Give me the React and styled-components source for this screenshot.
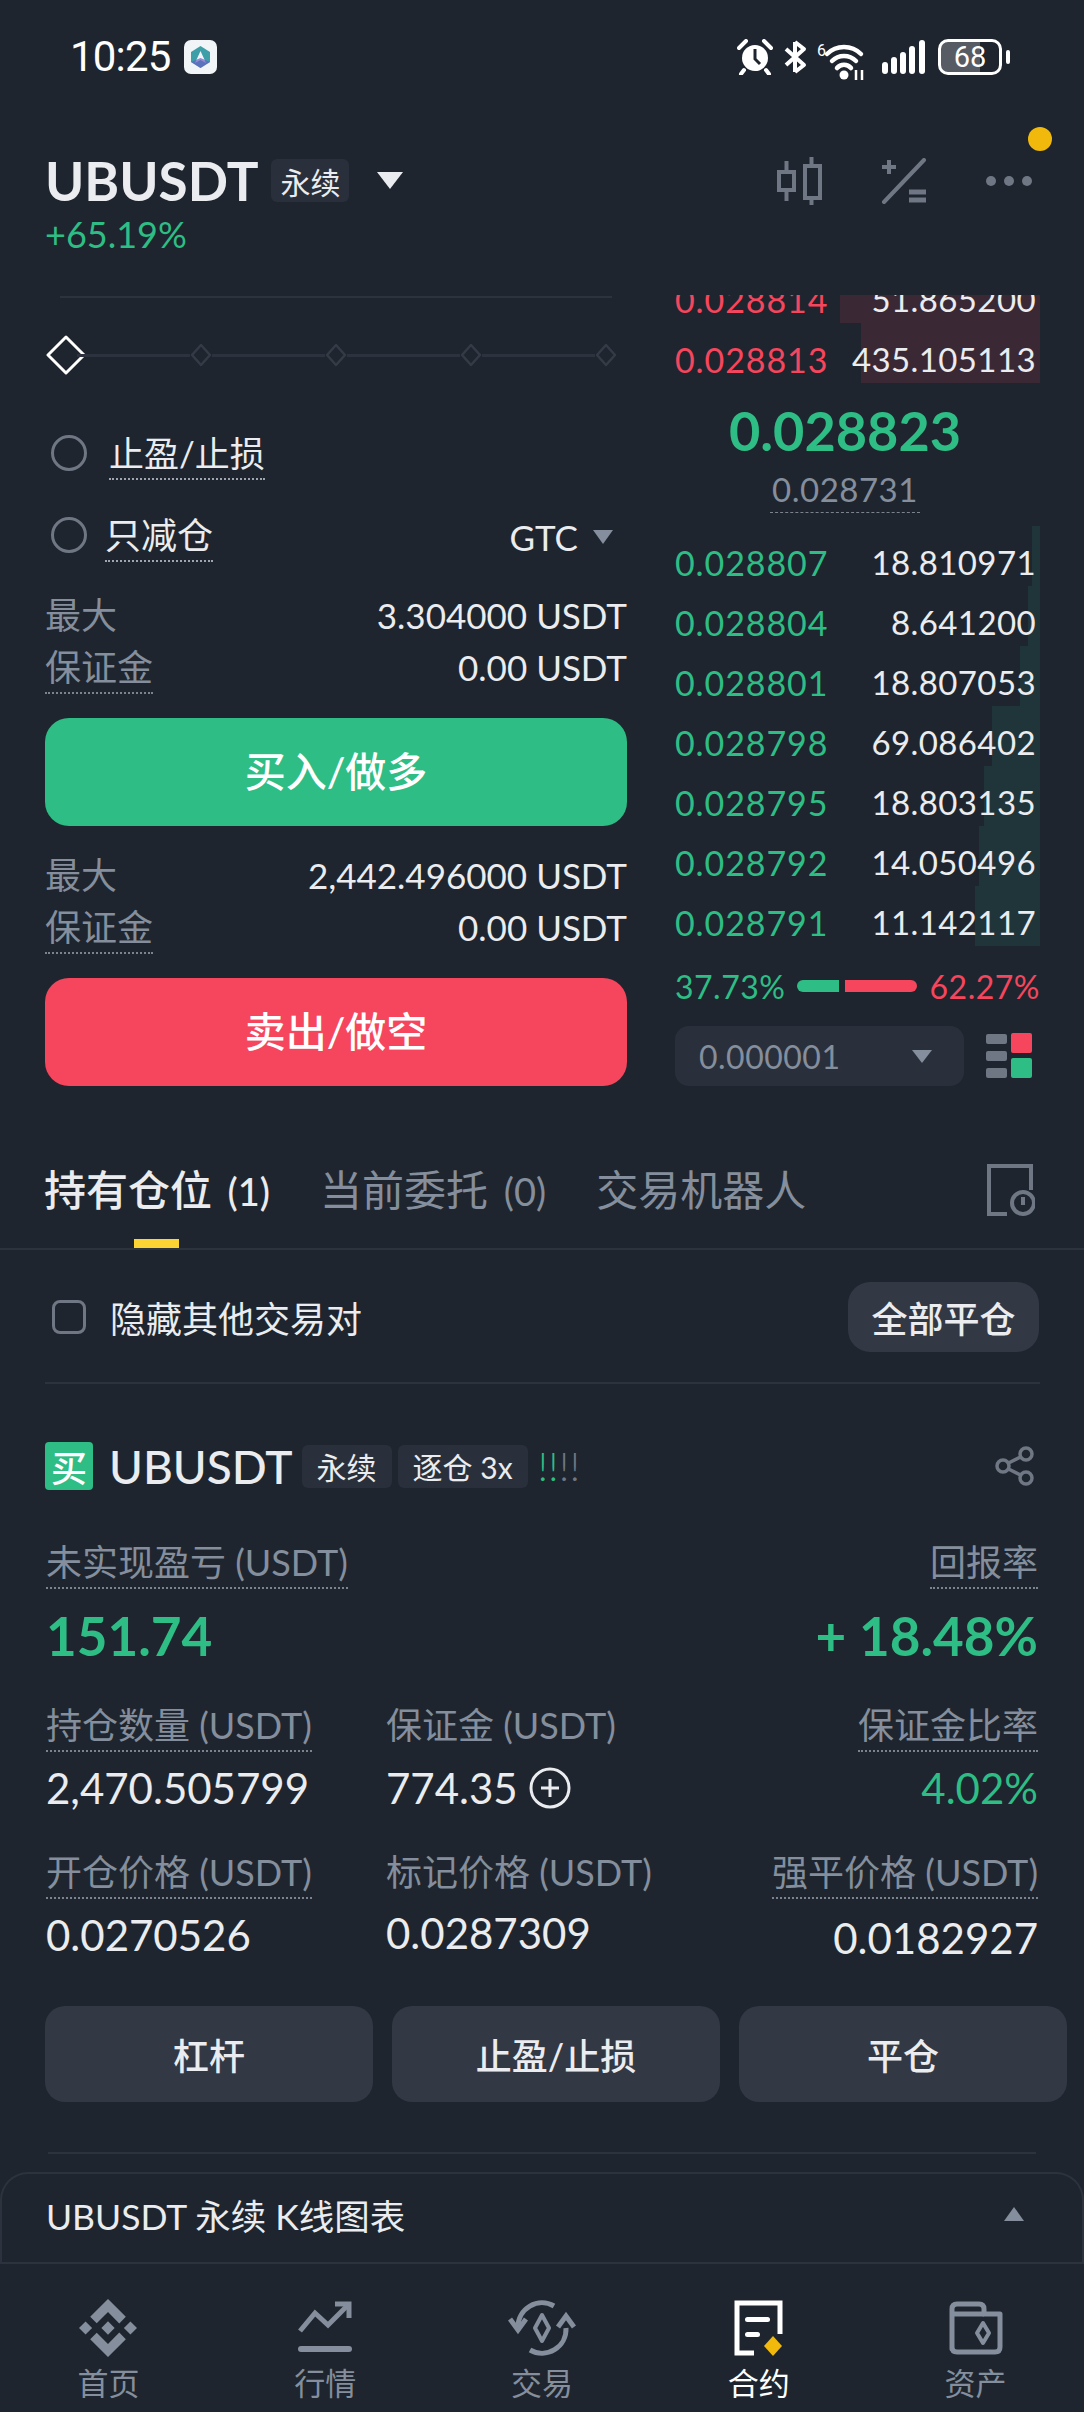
import styled, { createGlobalStyle } from "styled-components";

const GlobalStyle = createGlobalStyle`
  html, body {
    margin: 0;
    padding: 0;
    background: #1e252e;
  }
  * {
    box-sizing: border-box;
  }
`;

const GREEN = "#2ebd85";
const RED = "#f6465d";
const GRAY = "#848e9c";
const TEXT = "#eaecef";
const PANEL = "#2a303b";
const BUTTON = "#323844";
const LINE = "#2c333e";

const asks = [
  { price: "0.028814", qty: "51.865200", depth: 200 },
  { price: "0.028813", qty: "435.105113", depth: 179 },
];

const bids = [
  { price: "0.028807", qty: "18.810971", depth: 8 },
  { price: "0.028804", qty: "8.641200", depth: 12 },
  { price: "0.028801", qty: "18.807053", depth: 20 },
  { price: "0.028798", qty: "69.086402", depth: 48 },
  { price: "0.028795", qty: "18.803135", depth: 56 },
  { price: "0.028792", qty: "14.050496", depth: 61 },
  { price: "0.028791", qty: "11.142117", depth: 65 },
];

const Page = styled.div`
  width: 1084px;
  height: 2412px;
  overflow: hidden;
  background: #1e252e;
  color: ${TEXT};
  font-family: Lato, "Noto Sans CJK SC", sans-serif;
`;

/* status bar */
const StatusBar = styled.div`
  height: 113px;
  padding: 0 74px 0 70px;
  display: flex;
  align-items: center;
  color: #fff;
`;

const Clock = styled.span`
  font-family: Roboto, sans-serif;
  font-size: 42px;
  letter-spacing: -0.8px;
  margin-right: 13px;
`;

const StatusIcons = styled.div`
  margin-left: auto;
  display: flex;
  align-items: center;
  gap: 9px;
`;

const Battery = styled.div`
  position: relative;
  width: 64px;
  height: 36px;
  border: 3px solid #fff;
  border-radius: 10px;
  margin-right: 8px;
  margin-left: 4px;
  background: linear-gradient(90deg, #575c64 68%, transparent 68%);
  font-family: Roboto, sans-serif;
  font-size: 29px;
  line-height: 30px;
  text-align: center;
  &::after {
    content: "";
    position: absolute;
    right: -11px;
    top: 8px;
    width: 4px;
    height: 14px;
    border-radius: 2px;
    background: #fff;
  }
`;

/* symbol header */
const Header = styled.div`
  height: 182px;
  padding: 44px 51px 0 45px;
`;

const TitleRow = styled.div`
  display: flex;
  align-items: center;
  height: 47px;
`;

const Symbol = styled.span`
  font-size: ${(p) => p.$size || 53}px;
  font-weight: ${(p) => p.$weight || 700};
  line-height: 47px;
`;

const Tag = styled.span`
  height: 43px;
  padding: 0 ${(p) => p.$pad || 9}px;
  margin-left: ${(p) => p.$left || 13}px;
  display: inline-flex;
  align-items: center;
  border-radius: 6px;
  background: ${PANEL};
  font-size: 30px;
  color: ${TEXT};
  white-space: nowrap;
`;

const Caret = styled.span`
  display: inline-block;
  width: 0;
  height: 0;
  border-left: ${(p) => p.$w}px solid transparent;
  border-right: ${(p) => p.$w}px solid transparent;
  border-${(p) => (p.$up ? "bottom" : "top")}: ${(p) => p.$h}px solid ${(p) => p.$color || GRAY};
  margin-left: ${(p) => p.$left || 0}px;
  flex-shrink: 0;
`;

const ToolIcons = styled.div`
  margin-left: auto;
  display: flex;
  align-items: center;
  gap: 59px;
  position: relative;
`;

const Dot = styled.span`
  position: absolute;
  right: -19px;
  top: -30px;
  width: 24px;
  height: 24px;
  border-radius: 50%;
  background: #f0b90b;
`;

const Change = styled.div`
  margin-top: 10px;
  font-size: 36px;
  line-height: 40px;
  color: ${GREEN};
`;

/* trade panel */
const TradeGrid = styled.div`
  display: grid;
  grid-template-columns: 582px 365px;
  column-gap: 48px;
  padding-left: 45px;
`;

const FormColumn = styled.div`
  display: flex;
  flex-direction: column;
`;

const TopRule = styled.div`
  height: 2px;
  margin: 1px 15px 0;
  background: ${LINE};
`;

const Slider = styled.div`
  display: flex;
  align-items: center;
  height: 40px;
  margin: 37px 10px 0 10px;
`;

const SliderLine = styled.span`
  flex: 1;
  height: 3px;
  background: ${LINE};
`;

const DiamondSvg = styled.svg`
  flex-shrink: 0;
  margin: 0 ${(p) => (p.$big ? -9 : 0)}px;
`;

const OptionRow = styled.div`
  display: flex;
  align-items: flex-start;
  margin-top: ${(p) => p.$top}px;
`;

const Radio = styled.span`
  width: 36px;
  height: 36px;
  margin: 4px ${(p) => p.$gap}px 0 6px;
  border: 3px solid #6f7784;
  border-radius: 50%;
  flex-shrink: 0;
`;

const Dotted = styled.span`
  display: inline-block;
  font-size: ${(p) => p.$size || 36}px;
  line-height: 44px;
  height: 49px;
  padding-bottom: 3px;
  border-bottom: 2px dotted ${(p) => p.$line || "#7b838f"};
  color: ${(p) => p.$color || GRAY};
  white-space: nowrap;
`;

const PlainLabel = styled.div`
  height: 49px;
  font-size: 36px;
  line-height: 44px;
  color: ${GRAY};
  white-space: nowrap;
`;

const Tif = styled.div`
  margin-left: auto;
  display: flex;
  align-items: center;
  height: 44px;
  margin-top: 2px;
  padding-right: 14px;
  font-size: 35px;
  color: ${TEXT};
`;

const InfoRow = styled.div`
  display: flex;
  justify-content: space-between;
  margin-top: ${(p) => p.$top}px;
  font-size: 35px;
  line-height: 44px;
  color: ${TEXT};
`;

const InfoLabel = styled.span`
  font-size: 36px;
  color: ${GRAY};
`;

const ActionButton = styled.div`
  height: 108px;
  margin-top: ${(p) => p.$top}px;
  padding-bottom: 6px;
  display: flex;
  align-items: center;
  justify-content: center;
  border-radius: 24px;
  background: ${(p) => p.$color};
  color: #fff;
  font-size: 41px;
  font-weight: 500;
`;

/* order book */
const BookColumn = styled.div`
  display: flex;
  flex-direction: column;
`;

const AskList = styled.div`
  height: 88px;
  overflow: hidden;
  display: flex;
  flex-direction: column;
  justify-content: flex-end;
`;

const BookRow = styled.div`
  position: relative;
  flex-shrink: 0;
  height: 60px;
  padding: 12px 4px 0 0;
  display: flex;
  align-items: center;
  justify-content: space-between;
  font-size: 33px;
`;

const BookPrice = styled.span`
  position: relative;
  font-size: 34px;
  letter-spacing: 0.9px;
  color: ${(p) => p.$color};
`;

const BookQty = styled.span`
  position: relative;
  letter-spacing: 0.4px;
  color: ${TEXT};
`;

const DepthBar = styled.span`
  position: absolute;
  right: 0;
  top: 0;
  bottom: 0;
  background: ${(p) => p.$color};
`;

const MidBlock = styled.div`
  width: 340px;
  display: flex;
  flex-direction: column;
  align-items: center;
`;

const MidPrice = styled.div`
  margin-top: 18px;
  font-size: 54px;
  font-weight: 700;
  line-height: 60px;
  color: ${GREEN};
`;

const MarkPrice = styled.div`
  margin-top: 8px;
  height: 44px;
  font-size: 33px;
  line-height: 40px;
  letter-spacing: 0.5px;
  color: ${GRAY};
  border-bottom: 1px dashed #7b838f;
  padding: 0 2px;
`;

const BidList = styled.div`
  margin-top: 13px;
  display: flex;
  flex-direction: column;
`;

const RatioRow = styled.div`
  height: 40px;
  margin-top: 20px;
  display: flex;
  align-items: center;
  font-size: 32px;
  letter-spacing: 0.5px;
`;

const RatioText = styled.span`
  color: ${(p) => p.$color};
`;

const RatioBars = styled.div`
  flex: 1;
  margin: 0 12px;
  display: flex;
  gap: 6px;
`;

const RatioBar = styled.span`
  height: 12px;
  background: ${(p) => p.$color};
  border-radius: ${(p) => p.$radius};
`;

const StepRow = styled.div`
  margin-top: 20px;
  display: flex;
  align-items: center;
  justify-content: space-between;
  padding-right: 7px;
`;

const StepSelect = styled.div`
  width: 289px;
  height: 60px;
  padding: 0 32px 0 24px;
  display: flex;
  align-items: center;
  justify-content: space-between;
  border-radius: 14px;
  background: ${PANEL};
  font-size: 32px;
  letter-spacing: 0.5px;
  color: ${GRAY};
`;

/* tabs */
const TabBar = styled.div`
  margin-top: 78px;
  height: 86px;
  padding: 0 49px 0 44px;
  display: flex;
  align-items: flex-start;
  gap: 50px;
  border-bottom: 2px solid ${LINE};
`;

const Tab = styled.div`
  position: relative;
  height: 84px;
  font-size: 42px;
  font-weight: ${(p) => (p.$active ? 500 : 400)};
  line-height: 52px;
  color: ${(p) => (p.$active ? TEXT : GRAY)};
  white-space: nowrap;
  ${(p) =>
    p.$active &&
    `&::after {
      content: "";
      position: absolute;
      left: 90px;
      bottom: 0;
      width: 45px;
      height: 9px;
      background: #fcd535;
    }`}
`;

const TabCount = styled.span`
  margin-left: 5px;
  font-size: 38px;
`;

const TabIcon = styled.div`
  margin-left: auto;
`;

/* positions */
const FilterRow = styled.div`
  padding: 32px 45px 30px 52px;
  display: flex;
  align-items: center;
`;

const Checkbox = styled.span`
  width: 34px;
  height: 34px;
  margin-right: 24px;
  border: 3px solid #6f7784;
  border-radius: 8px;
`;

const FilterText = styled.span`
  font-size: 36px;
  color: ${TEXT};
`;

const CloseAll = styled.div`
  margin-left: auto;
  width: 191px;
  height: 70px;
  display: flex;
  align-items: center;
  justify-content: center;
  border-radius: 22px;
  background: ${BUTTON};
  font-size: 36px;
  font-weight: 500;
`;

const Rule = styled.div`
  height: 2px;
  margin: ${(p) => p.$margin};
  background: ${LINE};
`;

const PositionHead = styled.div`
  margin-top: 58px;
  height: 48px;
  padding: 0 49px 0 45px;
  display: flex;
  align-items: center;
`;

const SideBadge = styled.span`
  width: 48px;
  height: 48px;
  margin-right: 16px;
  display: flex;
  align-items: center;
  justify-content: center;
  border-radius: 4px;
  background: ${GREEN};
  color: #fff;
  font-size: 36px;
  font-weight: 500;
`;

const Risk = styled.span`
  margin-left: 10px;
  font-size: 40px;
  font-weight: 300;
  letter-spacing: 0.5px;
  color: ${GREEN};
`;

const RiskOff = styled.span`
  color: #6f7784;
`;

const HeadIcon = styled.div`
  margin-left: auto;
  display: flex;
`;

const MetricGrid = styled.div`
  margin-top: 50px;
  padding: 0 46px;
  display: grid;
  grid-template-columns: 340px 1fr auto;
  row-gap: 37px;
`;

const Metric = styled.div`
  grid-column: ${(p) => p.$col};
  display: flex;
  flex-direction: column;
  align-items: ${(p) => (p.$end ? "flex-end" : "flex-start")};
`;

const MetricValue = styled.div`
  margin-top: ${(p) => p.$top || 11}px;
  display: flex;
  align-items: center;
  gap: 11px;
  font-size: 42px;
  line-height: 50px;
  color: ${(p) => p.$color || TEXT};
`;

const PnlValue = styled.div`
  margin-top: 17px;
  font-size: 53px;
  font-weight: 700;
  line-height: 60px;
  color: ${GREEN};
`;

const PositionActions = styled.div`
  margin-top: 43px;
  padding-left: 45px;
  display: flex;
  gap: 19px;
`;

const PositionButton = styled.div`
  width: 328px;
  height: 96px;
  flex-shrink: 0;
  display: flex;
  align-items: center;
  justify-content: center;
  border-radius: 20px;
  background: ${BUTTON};
  font-size: 36px;
  font-weight: 500;
`;

/* chart drawer and nav */
const ChartDrawer = styled.div`
  margin-top: 18px;
  height: 90px;
  padding: 0 58px 8px 44px;
  display: flex;
  align-items: center;
  justify-content: space-between;
  border: 2px solid ${LINE};
  border-bottom: 0;
  border-radius: 28px 28px 0 0;
  font-size: 35.5px;
`;

const BottomNav = styled.div`
  height: 151px;
  padding-top: 35px;
  display: grid;
  grid-template-columns: repeat(5, 1fr);
  border-top: 2px solid ${LINE};
`;

const NavItem = styled.div`
  display: flex;
  flex-direction: column;
  align-items: center;
  color: ${(p) => (p.$active ? "#fff" : GRAY)};
`;

const NavIcon = styled.div`
  height: 58px;
  display: flex;
  align-items: center;
`;

const NavLabel = styled.span`
  margin-top: 8px;
  font-size: 31px;
  line-height: 36px;
`;

function AppBadge() {
  return (
    <svg width="33" height="34" viewBox="0 0 33 34">
      <rect width="33" height="34" rx="7" fill="#f2f5f8" />
      <path d="M16.5 6 L26 12 V22 L16.5 28 L7 22 V12 Z" fill="#3f9fa8" />
      <path d="M16.5 11 L22 23 L16.5 20 L11 23 Z" fill="#f2f5f8" />
      <path d="M7 22 L16.5 28 L26 22 L16.5 18 Z" fill="#6a5fc4" opacity="0.7" />
    </svg>
  );
}

function AlarmIcon() {
  return (
    <svg width="36" height="36" viewBox="0 0 36 36">
      <circle cx="18" cy="19" r="13" fill="#fff" />
      <path d="M18 10 V20 L23 25" stroke="#1e252e" strokeWidth="3" fill="none" />
      <path d="M2 9 L9 2 M34 9 L27 2 M7 31 L4 35 M29 31 L32 35" stroke="#fff" strokeWidth="4" strokeLinecap="round" />
    </svg>
  );
}

function BluetoothIcon() {
  return (
    <svg width="26" height="36" viewBox="0 0 26 36">
      <path d="M13 3 L22 10 L4 26 M13 33 L22 26 L4 10 M13 3 V33" stroke="#fff" strokeWidth="4" fill="none" strokeLinejoin="round" />
    </svg>
  );
}

function WifiIcon() {
  return (
    <svg width="56" height="48" viewBox="0 -10 56 48">
      <text x="0" y="13" fontFamily="Roboto, sans-serif" fontSize="16" fill="#fff">6</text>
      <path d="M10 11 A24 24 0 0 1 44 11 M15 18 A17 17 0 0 1 39 18 M20 25 A9 9 0 0 1 34 25" stroke="#fff" strokeWidth="4.5" fill="none" strokeLinecap="round" />
      <circle cx="27" cy="32" r="4.5" fill="#fff" />
      <path d="M39 27 V37 M45 27 V37" stroke="#fff" strokeWidth="2.5" />
    </svg>
  );
}

function SignalIcon() {
  return (
    <svg width="43" height="34" viewBox="0 0 43 34">
      <rect x="0" y="22" width="6" height="12" rx="3" fill="#fff" />
      <rect x="9" y="17" width="6" height="17" rx="3" fill="#fff" />
      <rect x="18" y="12" width="6" height="22" rx="3" fill="#fff" />
      <rect x="27" y="6" width="6" height="28" rx="3" fill="#fff" />
      <rect x="37" y="0" width="6" height="34" rx="3" fill="#fff" />
    </svg>
  );
}

function CandleIcon() {
  return (
    <svg width="46" height="48" viewBox="0 0 46 48" fill="none" stroke="#6f7784" strokeWidth="4">
      <rect x="3" y="15" width="15" height="18" />
      <path d="M10.5 4 V15 M10.5 33 V44" />
      <rect x="29" y="9" width="15" height="32" />
      <path d="M35.5 0 V9 M35.5 41 V48" />
    </svg>
  );
}

function CalcIcon() {
  return (
    <svg width="45" height="46" viewBox="0 0 45 46" fill="none" stroke="#6f7784">
      <path d="M8 2 V16 M1 9 H15" strokeWidth="4" />
      <path d="M43 2 L3 44" strokeWidth="4" strokeLinecap="round" />
      <path d="M28 34 H45 M28 42 H45" strokeWidth="5" />
    </svg>
  );
}

function MoreIcon() {
  return (
    <svg width="48" height="12" viewBox="0 0 48 12" fill="#6f7784">
      <circle cx="6" cy="6" r="5" />
      <circle cx="24" cy="6" r="5" />
      <circle cx="42" cy="6" r="5" />
    </svg>
  );
}

function Diamond({ big }) {
  const w = big ? 40 : 22;
  const h = big ? 40 : 24;
  return (
    <DiamondSvg $big={big} width={w} height={h} viewBox={`0 0 ${w} ${h}`}>
      <polygon
        points={`${w / 2},2 ${w - 2},${h / 2} ${w / 2},${h - 2} 2,${h / 2}`}
        fill="#1e252e"
        stroke={big ? "#fff" : "#343b47"}
        strokeWidth={big ? 3 : 2.5}
        strokeLinejoin="round"
      />
    </DiamondSvg>
  );
}

function LayoutIcon() {
  return (
    <svg width="47" height="46" viewBox="0 0 47 46">
      <rect x="0" y="1" width="21" height="10" rx="2" fill="#6f7784" />
      <rect x="0" y="18" width="21" height="10" rx="2" fill="#6f7784" />
      <rect x="0" y="35" width="21" height="10" rx="2" fill="#6f7784" />
      <rect x="25" y="0" width="21" height="20" rx="2" fill={RED} />
      <rect x="25" y="25" width="21" height="20" rx="2" fill={GREEN} />
    </svg>
  );
}

function HistoryIcon() {
  return (
    <svg width="48" height="52" viewBox="0 0 48 52" fill="none" stroke="#6f7784" strokeWidth="4">
      <path d="M20 50 H2 V2 H44 V26" />
      <circle cx="36" cy="39" r="11" />
      <path d="M36 33 V41" />
    </svg>
  );
}

function ShareIcon() {
  return (
    <svg width="40" height="40" viewBox="0 0 40 40" fill="none" stroke="#6f7784" strokeWidth="3.5">
      <circle cx="8" cy="20" r="6" />
      <circle cx="31" cy="8" r="6" />
      <circle cx="31" cy="32" r="6" />
      <path d="M13.5 17 L25.5 11 M13.5 23 L25.5 29" />
    </svg>
  );
}

function PlusCircle() {
  return (
    <svg width="42" height="42" viewBox="0 0 42 42" fill="none" stroke={TEXT} strokeWidth="3">
      <circle cx="21" cy="21" r="19" />
      <path d="M21 12 V30 M12 21 H30" />
    </svg>
  );
}

function HomeIcon() {
  return (
    <svg width="58" height="58" viewBox="0 0 126.61 126.61" fill="#848e9c">
      <path d="M38.73 53.2l24.59-24.58 24.6 24.6 14.3-14.31L63.32 0 24.43 38.9l14.3 14.3zM0 63.31l14.3-14.31 14.31 14.31-14.31 14.3zM38.73 73.41l24.59 24.59 24.6-24.6 14.31 14.29-38.9 38.91-38.91-38.88-.02-.02 14.33-14.29zM98 63.31l14.3-14.31 14.31 14.3-14.31 14.32zM77.83 63.3L63.32 48.78 52.59 59.51l-1.24 1.23-2.54 2.54 14.51 14.5 14.51-14.47z" />
    </svg>
  );
}

function MarketIcon() {
  return (
    <svg width="54" height="54" viewBox="0 0 54 54" fill="none" stroke="#848e9c">
      <path d="M2 30 L17 12 L30 24 L51 3" strokeWidth="5" />
      <path d="M37 3 H51 V17" strokeWidth="5" />
      <rect x="0" y="45" width="54" height="6" rx="3" fill="#848e9c" stroke="none" />
    </svg>
  );
}

function TradeIcon() {
  return (
    <svg width="68" height="56" viewBox="0 0 68 56" fill="none" stroke="#848e9c" strokeWidth="5">
      <path d="M10 27 A24 24 0 0 1 46 6" />
      <path d="M2 19 L10 30 L18 19" />
      <path d="M58 28 A24 24 0 0 1 22 50" />
      <path d="M50 27 L58 16 L66 27" />
      <polygon points="34,15 41,28 34,41 27,28" strokeWidth="4" strokeLinejoin="round" />
    </svg>
  );
}

function FuturesIcon() {
  return (
    <svg width="50" height="56" viewBox="0 0 50 56" fill="none" stroke="#fff" strokeWidth="5">
      <path d="M20 53 H3 V3 H46 V34" />
      <rect x="11" y="17" width="25" height="5" rx="2.5" fill="#fff" stroke="none" />
      <rect x="11" y="32" width="15" height="5" rx="2.5" fill="#fff" stroke="none" />
      <polygon points="39,36 48,46 39,56 30,46" fill="#f0b90b" stroke="none" />
    </svg>
  );
}

function WalletIcon() {
  return (
    <svg width="54" height="54" viewBox="0 0 54 54" fill="none" stroke="#848e9c" strokeWidth="5">
      <path d="M3 48 V8 Q3 3 8 3 H30 Q35 3 35 8 V13 H51 V46 Q51 51 46 51 H8 Q3 51 3 46 Z" strokeLinejoin="round" />
      <path d="M3 13 H35" />
      <polygon points="34,22 40,32 34,42 28,32" strokeWidth="4" strokeLinejoin="round" />
    </svg>
  );
}

const navItems = [
  { label: "首页", icon: <HomeIcon /> },
  { label: "行情", icon: <MarketIcon /> },
  { label: "交易", icon: <TradeIcon /> },
  { label: "合约", icon: <FuturesIcon />, active: true },
  { label: "资产", icon: <WalletIcon /> },
];

function OrderRow({ row, color, barColor }) {
  return (
    <BookRow>
      <DepthBar $color={barColor} style={{ width: row.depth }} />
      <BookPrice $color={color}>{row.price}</BookPrice>
      <BookQty>{row.qty}</BookQty>
    </BookRow>
  );
}

export default function App() {
  return (
    <Page>
      <GlobalStyle />
      <StatusBar>
        <Clock>10:25</Clock>
        <AppBadge />
        <StatusIcons>
          <AlarmIcon />
          <BluetoothIcon />
          <WifiIcon />
          <SignalIcon />
          <Battery>68</Battery>
        </StatusIcons>
      </StatusBar>

      <Header>
        <TitleRow>
          <Symbol>UBUSDT</Symbol>
          <Tag>永续</Tag>
          <Caret $w={13} $h={17} $color={TEXT} $left={28} />
          <ToolIcons>
            <CandleIcon />
            <CalcIcon />
            <MoreIcon />
            <Dot />
          </ToolIcons>
        </TitleRow>
        <Change>+65.19%</Change>
      </Header>

      <TradeGrid>
        <FormColumn>
          <TopRule />
          <Slider>
            <Diamond big />
            <SliderLine />
            <Diamond />
            <SliderLine />
            <Diamond />
            <SliderLine />
            <Diamond />
            <SliderLine />
            <Diamond />
          </Slider>
          <OptionRow $top={56}>
            <Radio $gap={22} />
            <Dotted $size={35} $color={TEXT} $line="#a0a6b0">止盈/止损</Dotted>
          </OptionRow>
          <OptionRow $top={33}>
            <Radio $gap={18} />
            <Dotted $color={TEXT} $line="#a0a6b0">只减仓</Dotted>
            <Tif>
              GTC
              <Caret $w={10} $h={14} $left={15} />
            </Tif>
          </OptionRow>
          <InfoRow $top={31}>
            <InfoLabel>最大</InfoLabel>
            <span>3.304000 USDT</span>
          </InfoRow>
          <InfoRow $top={8}>
            <Dotted>保证金</Dotted>
            <span>0.00 USDT</span>
          </InfoRow>
          <ActionButton $top={24} $color={GREEN}>买入/做多</ActionButton>
          <InfoRow $top={27}>
            <InfoLabel>最大</InfoLabel>
            <span>2,442.496000 USDT</span>
          </InfoRow>
          <InfoRow $top={8}>
            <Dotted>保证金</Dotted>
            <span>0.00 USDT</span>
          </InfoRow>
          <ActionButton $top={24} $color={RED}>卖出/做空</ActionButton>
        </FormColumn>

        <BookColumn>
          <AskList>
            {asks.map((row) => (
              <OrderRow key={row.price} row={row} color={RED} barColor="#3a2935" />
            ))}
          </AskList>
          <MidBlock>
            <MidPrice>0.028823</MidPrice>
            <MarkPrice>0.028731</MarkPrice>
          </MidBlock>
          <BidList>
            {bids.map((row) => (
              <OrderRow key={row.price} row={row} color={GREEN} barColor="#20353a" />
            ))}
          </BidList>
          <RatioRow>
            <RatioText $color={GREEN}>37.73%</RatioText>
            <RatioBars>
              <RatioBar $color={GREEN} $radius="6px 0 0 6px" style={{ width: 42 }} />
              <RatioBar $color={RED} $radius="0 6px 6px 0" style={{ width: 72 }} />
            </RatioBars>
            <RatioText $color={RED}>62.27%</RatioText>
          </RatioRow>
          <StepRow>
            <StepSelect>
              0.000001
              <Caret $w={10} $h={13} />
            </StepSelect>
            <LayoutIcon />
          </StepRow>
        </BookColumn>
      </TradeGrid>

      <TabBar>
        <Tab $active>
          持有仓位 <TabCount>(1)</TabCount>
        </Tab>
        <Tab>
          当前委托 <TabCount>(0)</TabCount>
        </Tab>
        <Tab>交易机器人</Tab>
        <TabIcon>
          <HistoryIcon />
        </TabIcon>
      </TabBar>

      <FilterRow>
        <Checkbox />
        <FilterText>隐藏其他交易对</FilterText>
        <CloseAll>全部平仓</CloseAll>
      </FilterRow>
      <Rule $margin="0 44px 0 45px" />

      <PositionHead>
        <SideBadge>买</SideBadge>
        <Symbol $size={46} $weight={500}>UBUSDT</Symbol>
        <Tag $left={9} $pad={15}>永续</Tag>
        <Tag $left={6} $pad={15}>逐仓 3x</Tag>
        <Risk>
          !!<RiskOff>!!</RiskOff>
        </Risk>
        <HeadIcon>
          <ShareIcon />
        </HeadIcon>
      </PositionHead>

      <MetricGrid>
        <Metric $col={1}>
          <Dotted>未实现盈亏 (USDT)</Dotted>
          <PnlValue>151.74</PnlValue>
        </Metric>
        <Metric $col={3} $end>
          <Dotted>回报率</Dotted>
          <PnlValue>+ 18.48%</PnlValue>
        </Metric>

        <Metric $col={1}>
          <Dotted>持仓数量 (USDT)</Dotted>
          <MetricValue>2,470.505799</MetricValue>
        </Metric>
        <Metric $col={2}>
          <PlainLabel>保证金 (USDT)</PlainLabel>
          <MetricValue>
            774.35
            <PlusCircle />
          </MetricValue>
        </Metric>
        <Metric $col={3} $end>
          <Dotted>保证金比率</Dotted>
          <MetricValue $color={GREEN}>4.02%</MetricValue>
        </Metric>

        <Metric $col={1}>
          <Dotted>开仓价格 (USDT)</Dotted>
          <MetricValue>0.0270526</MetricValue>
        </Metric>
        <Metric $col={2}>
          <PlainLabel>标记价格 (USDT)</PlainLabel>
          <MetricValue $top={9}>0.0287309</MetricValue>
        </Metric>
        <Metric $col={3} $end>
          <Dotted>强平价格 (USDT)</Dotted>
          <MetricValue $top={14}>0.0182927</MetricValue>
        </Metric>
      </MetricGrid>

      <PositionActions>
        <PositionButton>杠杆</PositionButton>
        <PositionButton>止盈/止损</PositionButton>
        <PositionButton>平仓</PositionButton>
      </PositionActions>

      <Rule $margin="50px 48px 0" />

      <ChartDrawer>
        UBUSDT 永续 K线图表
        <Caret $up $w={10} $h={14} />
      </ChartDrawer>

      <BottomNav>
        {navItems.map((item) => (
          <NavItem key={item.label} $active={item.active}>
            <NavIcon>{item.icon}</NavIcon>
            <NavLabel>{item.label}</NavLabel>
          </NavItem>
        ))}
      </BottomNav>
    </Page>
  );
}
